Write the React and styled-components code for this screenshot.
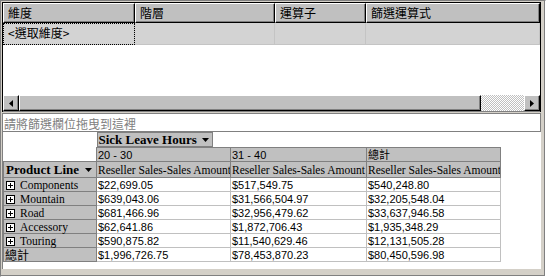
import * as React from "react";
import styled, { createGlobalStyle } from "styled-components";

const GlobalStyle = createGlobalStyle`
  html, body {
    margin: 0;
    padding: 0;
    background: #fff;
  }
  * {
    box-sizing: border-box;
  }
`;

const CJK = `"Noto Sans CJK TC", "Liberation Sans", sans-serif`;
const SERIF = `"Liberation Serif", "Noto Sans CJK TC", serif`;
const SANS = `"Liberation Sans", "Noto Sans CJK TC", sans-serif`;

const Styled = {
  Frame: styled.div`
    width: 546px;
    height: 277px;
    display: flex;
    flex-direction: column;
    gap: 1px;
    background: #d4d0c8;
    border-top: 1px solid #808080;
    border-left: 1px solid #808080;
    border-right: 1px solid #fff;
    border-bottom: 1px solid #fff;
    padding: 1px 4px 7px 1px;
    box-shadow: inset -1px -1px 0 #808080;
  `,
  FilterPanel: styled.div`
    height: 110px;
    display: flex;
    flex-direction: column;
    background: #fff;
    border-top: 1px solid #000;
    border-left: 1px solid #000;
    border-right: 1px solid #000;
  `,
  HeaderRow: styled.div`
    display: grid;
    grid-template-columns: 132px 140px 91px 1fr;
    height: 20px;
  `,
  HeaderCell: styled.div`
    background: #c0c0c0;
    border-top: 1px solid #fff;
    border-left: 1px solid #fff;
    border-right: 1px solid #000;
    border-bottom: 1px solid #000;
    box-shadow: inset -1px -1px 0 #808080;
    font: 12px/18px ${CJK};
    color: #000;
    padding-left: 4px;
    white-space: nowrap;
  `,
  DataRow: styled.div`
    display: grid;
    grid-template-columns: 132px 140px 91px 1fr;
    height: 22px;
    background: #d3d3d3;
  `,
  DataCell: styled.div`
    border-right: 1px solid #c4c4c4;
    border-bottom: 1px solid #c4c4c4;
    font: 12px/20px ${CJK};
    color: #000;
    padding-left: 5px;
    outline: ${(p) => (p.$focus ? "1px dotted #000" : "none")};
    outline-offset: -1px;
  `,
  Blank: styled.div`
    flex: 1;
    background: #fff;
  `,
  ScrollBar: styled.div`
    height: 17px;
    display: flex;
    background: repeating-conic-gradient(#c0c0c0 0 25%, #fff 0 50%) 0 0 / 2px 2px;
    border-bottom: 1px solid #808080;
  `,
  ScrollButton: styled.div`
    width: 16px;
    height: 16px;
    flex: none;
    display: flex;
    align-items: center;
    justify-content: center;
    background: #c0c0c0;
    border-top: 1px solid #fff;
    border-left: 1px solid #fff;
    border-right: 1px solid #000;
    border-bottom: 1px solid #000;
    box-shadow: inset -1px -1px 0 #808080;
  `,
  Thumb: styled.div`
    width: 462px;
    height: 16px;
    flex: none;
    background: #c0c0c0;
    border-top: 1px solid #fff;
    border-left: 1px solid #fff;
    border-right: 1px solid #000;
    border-bottom: 1px solid #000;
    box-shadow: inset -1px -1px 0 #808080;
  `,
  Track: styled.div`
    flex: 1;
  `,
  PivotPanel: styled.div`
    flex: 1;
    display: flex;
    flex-direction: column;
    background: #fff;
    border-top: 1px solid #808080;
    border-left: 1px solid #808080;
  `,
  DropZone: styled.div`
    height: 18px;
    border-bottom: 1px solid #808080;
    border-right: 1px solid #808080;
    font: 12px/19px ${CJK};
    color: #808080;
    padding-left: 1px;
    white-space: nowrap;
  `,
  Table: styled.table`
    border-collapse: collapse;
    border-spacing: 0;
    table-layout: fixed;
    width: 497px;
  `,
  Gap: styled.td`
    padding: 0;
    border: none;
    height: ${(p) => (p.$h ? `${p.$h}px` : "14px")};
  `,
  FieldButton: styled.div`
    display: flex;
    align-items: center;
    gap: 5px;
    height: 15px;
    width: 116px;
    padding-left: 1px;
    background: #c0c0c0;
    border: 1px solid #808080;
    font: bold 13px/13px ${SERIF};
    color: #000;
    white-space: nowrap;
  `,
  ColHead: styled.td`
    padding: 0 0 0 1px;
    height: 14px;
    background: #c0c0c0;
    border: 1px solid #808080;
    font: ${(p) => (p.$serif ? `11.5px/12px ${SERIF}` : `11px/12px ${SANS}`)};
    color: #000;
    white-space: nowrap;
    overflow: hidden;
  `,
  RowHead: styled.td`
    padding: 0 0 0 ${(p) => (p.$plain ? "1px" : "2px")};
    height: 14px;
    background: #c0c0c0;
    border: 1px solid #808080;
    font: ${(p) => (p.$plain ? `12px/12px ${CJK}` : `11.5px/12px ${SERIF}`)};
    color: #000;
    white-space: nowrap;
  `,
  FieldHead: styled.td`
    padding: 0 0 0 2px;
    height: 16px;
    background: #c0c0c0;
    border: 1px solid #808080;
    font: bold 13px/14px ${SERIF};
    color: #000;
    white-space: nowrap;
  `,
  Value: styled.td`
    padding: 0 0 0 1px;
    height: 14px;
    background: #fff;
    border: 1px solid #c0c0c0;
    border-left-color: #a0a0a0;
    font: 11px/12px ${SANS};
    color: #000;
    white-space: nowrap;
    overflow: hidden;
  `,
  HeadInner: styled.div`
    display: flex;
    align-items: center;
    gap: 5px;
    height: 12px;
  `,
  FieldInner: styled.div`
    display: flex;
    align-items: center;
    gap: 6px;
    height: 14px;
  `,
  PlainHead: styled.div`
    height: 12px;
    line-height: 12px;
  `,
};

const Arrow = ({ dir }) => (
  <svg width="4" height="7" viewBox="0 0 4 7">
    {dir === "left" ? (
      <path d="M4 0 L0 3.5 L4 7 Z" fill="#000" />
    ) : (
      <path d="M0 0 L4 3.5 L0 7 Z" fill="#000" />
    )}
  </svg>
);

const DropDown = () => (
  <svg width="7" height="4" viewBox="0 0 7 4">
    <path d="M0 0 H7 L3.5 4 Z" fill="#000" />
  </svg>
);

const Expand = () => (
  <svg width="9" height="9" viewBox="0 0 9 9" style={{ flex: "none", marginTop: 2 }}>
    <rect x="0.5" y="0.5" width="8" height="8" fill="#fff" stroke="#000" />
    <path d="M2 4.5 H7 M4.5 2 V7" stroke="#000" />
  </svg>
);

const columns = ["20 - 30", "31 - 40", "總計"];
const rows = [
  ["Components", "$22,699.05", "$517,549.75", "$540,248.80"],
  ["Mountain", "$639,043.06", "$31,566,504.97", "$32,205,548.04"],
  ["Road", "$681,466.96", "$32,956,479.62", "$33,637,946.58"],
  ["Accessory", "$62,641.86", "$1,872,706.43", "$1,935,348.29"],
  ["Touring", "$590,875.82", "$11,540,629.46", "$12,131,505.28"],
];
const total = ["總計", "$1,996,726.75", "$78,453,870.23", "$80,450,596.98"];

export default function App() {
  return (
    <>
      <GlobalStyle />
      <Styled.Frame>
        <Styled.FilterPanel>
          <Styled.HeaderRow>
            <Styled.HeaderCell>維度</Styled.HeaderCell>
            <Styled.HeaderCell>階層</Styled.HeaderCell>
            <Styled.HeaderCell>運算子</Styled.HeaderCell>
            <Styled.HeaderCell>篩選運算式</Styled.HeaderCell>
          </Styled.HeaderRow>
          <Styled.DataRow>
            <Styled.DataCell $focus>&lt;選取維度&gt;</Styled.DataCell>
            <Styled.DataCell />
            <Styled.DataCell />
            <Styled.DataCell />
          </Styled.DataRow>
          <Styled.Blank />
          <Styled.ScrollBar>
            <Styled.ScrollButton>
              <Arrow dir="left" />
            </Styled.ScrollButton>
            <Styled.Thumb />
            <Styled.Track />
            <Styled.ScrollButton>
              <Arrow dir="right" />
            </Styled.ScrollButton>
          </Styled.ScrollBar>
        </Styled.FilterPanel>
        <Styled.PivotPanel>
          <Styled.DropZone>請將篩選欄位拖曳到這裡</Styled.DropZone>
          <Styled.Table>
            <colgroup>
              <col style={{ width: 93 }} />
              <col style={{ width: 134 }} />
              <col style={{ width: 136 }} />
              <col style={{ width: 134 }} />
            </colgroup>
            <tbody>
              <tr>
                <Styled.Gap $h={15} />
                <Styled.Gap $h={15} colSpan={3}>
                  <Styled.FieldButton>
                    Sick Leave Hours
                    <DropDown />
                  </Styled.FieldButton>
                </Styled.Gap>
              </tr>
              <tr>
                <Styled.Gap />
                {columns.map((c) => (
                  <Styled.ColHead key={c}>{c}</Styled.ColHead>
                ))}
              </tr>
              <tr>
                <Styled.FieldHead>
                  <Styled.FieldInner>
                    Product Line
                    <DropDown />
                  </Styled.FieldInner>
                </Styled.FieldHead>
                {columns.map((c) => (
                  <Styled.ColHead key={c} $serif>
                    Reseller Sales-Sales Amount
                  </Styled.ColHead>
                ))}
              </tr>
              {rows.map((r) => (
                <tr key={r[0]}>
                  <Styled.RowHead>
                    <Styled.HeadInner>
                      <Expand />
                      {r[0]}
                    </Styled.HeadInner>
                  </Styled.RowHead>
                  <Styled.Value>{r[1]}</Styled.Value>
                  <Styled.Value>{r[2]}</Styled.Value>
                  <Styled.Value>{r[3]}</Styled.Value>
                </tr>
              ))}
              <tr>
                <Styled.RowHead $plain>
                  <Styled.PlainHead>{total[0]}</Styled.PlainHead>
                </Styled.RowHead>
                <Styled.Value>{total[1]}</Styled.Value>
                <Styled.Value>{total[2]}</Styled.Value>
                <Styled.Value>{total[3]}</Styled.Value>
              </tr>
            </tbody>
          </Styled.Table>
        </Styled.PivotPanel>
      </Styled.Frame>
    </>
  );
}
